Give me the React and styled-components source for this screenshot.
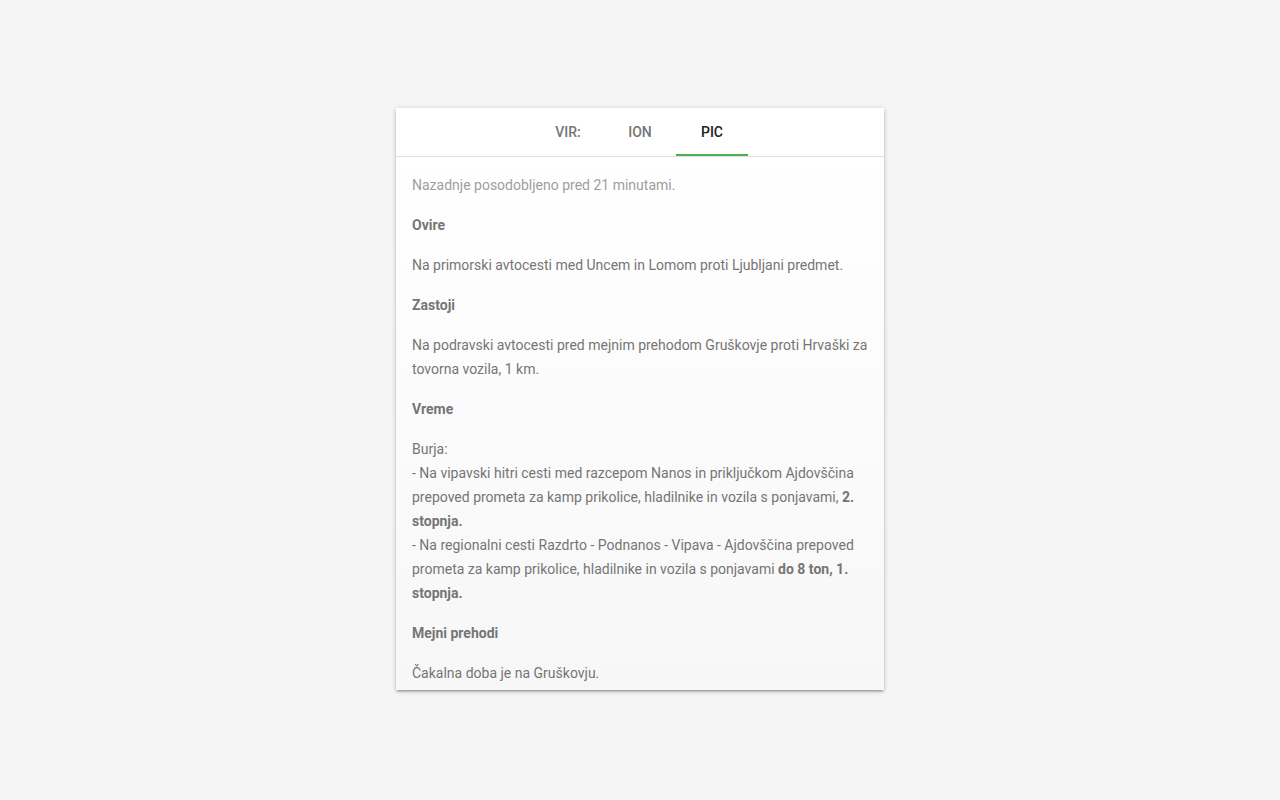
import React, { useState } from "react";
import styled, { createGlobalStyle } from "styled-components";

const GlobalStyle = createGlobalStyle`
  html, body {
    margin: 0;
    padding: 0;
    background: #f5f5f5;
    font-family: Roboto, "Liberation Sans", sans-serif;
  }
`;

const Page = styled.div`
  min-height: 800px;
  display: flex;
  justify-content: center;
  padding-top: 108px;
  box-sizing: border-box;
`;

const Card = styled.div`
  width: 488px;
  height: 582px;
  background: #fff;
  box-shadow: 0 2px 2px 0 rgba(0, 0, 0, 0.14), 0 3px 1px -2px rgba(0, 0, 0, 0.12),
    0 1px 5px 0 rgba(0, 0, 0, 0.2);
  display: flex;
  flex-direction: column;
  overflow: hidden;
`;

const TabBar = styled.div`
  height: 48px;
  display: flex;
  justify-content: center;
  border-bottom: 1px solid #e0e0e0;
  flex-shrink: 0;
`;

const Tab = styled.button`
  min-width: 72px;
  padding: 2px 12px 0;
  height: 48px;
  border: none;
  background: none;
  font-family: Roboto, "Liberation Sans", sans-serif;
  font-size: 14px;
  font-weight: 500;
  text-transform: uppercase;
  color: ${(p) => (p.active ? "#212121" : "#757575")};
  border-bottom: 2px solid ${(p) => (p.active ? "#4caf50" : "transparent")};
  box-sizing: border-box;
  cursor: pointer;
`;

const Content = styled.div`
  flex: 1;
  overflow: hidden;
  padding: 16px;
  background: linear-gradient(#ffffff, #f7f7f7);
  color: #757575;
  font-size: 14px;
  line-height: 24px;
`;

const Para = styled.p`
  margin: 0 0 16px;
  color: ${(p) => (p.muted ? "#9e9e9e" : "#757575")};
  font-weight: ${(p) => (p.heading ? 700 : 400)};
`;

export default function App() {
  const [tab, setTab] = useState("pic");
  const tabs = [
    { id: "vir", label: "Vir:" },
    { id: "ion", label: "ION" },
    { id: "pic", label: "PIC" },
  ];
  return (
    <>
      <GlobalStyle />
      <Page>
        <Card>
          <TabBar>
            {tabs.map((t) => (
              <Tab key={t.id} active={tab === t.id} onClick={() => setTab(t.id)}>
                {t.label}
              </Tab>
            ))}
          </TabBar>
          <Content>
            <Para muted>Nazadnje posodobljeno pred 21 minutami.</Para>
            <Para heading>Ovire</Para>
            <Para>Na primorski avtocesti med Uncem in Lomom proti Ljubljani predmet.</Para>
            <Para heading>Zastoji</Para>
            <Para>
              Na podravski avtocesti pred mejnim prehodom Gruškovje proti Hrvaški za tovorna
              vozila, 1 km.
            </Para>
            <Para heading>Vreme</Para>
            <Para>
              Burja:
              <br />- Na vipavski hitri cesti med razcepom Nanos in priključkom Ajdovščina
              prepoved prometa za kamp prikolice, hladilnike in vozila s ponjavami,{" "}
              <b>2. stopnja.</b>
              <br />- Na regionalni cesti Razdrto - Podnanos - Vipava - Ajdovščina prepoved
              prometa za kamp prikolice, hladilnike in vozila s ponjavami{" "}
              <b>do 8 ton, 1. stopnja.</b>
            </Para>
            <Para heading>Mejni prehodi</Para>
            <Para>Čakalna doba je na Gruškovju.</Para>
          </Content>
        </Card>
      </Page>
    </>
  );
}
